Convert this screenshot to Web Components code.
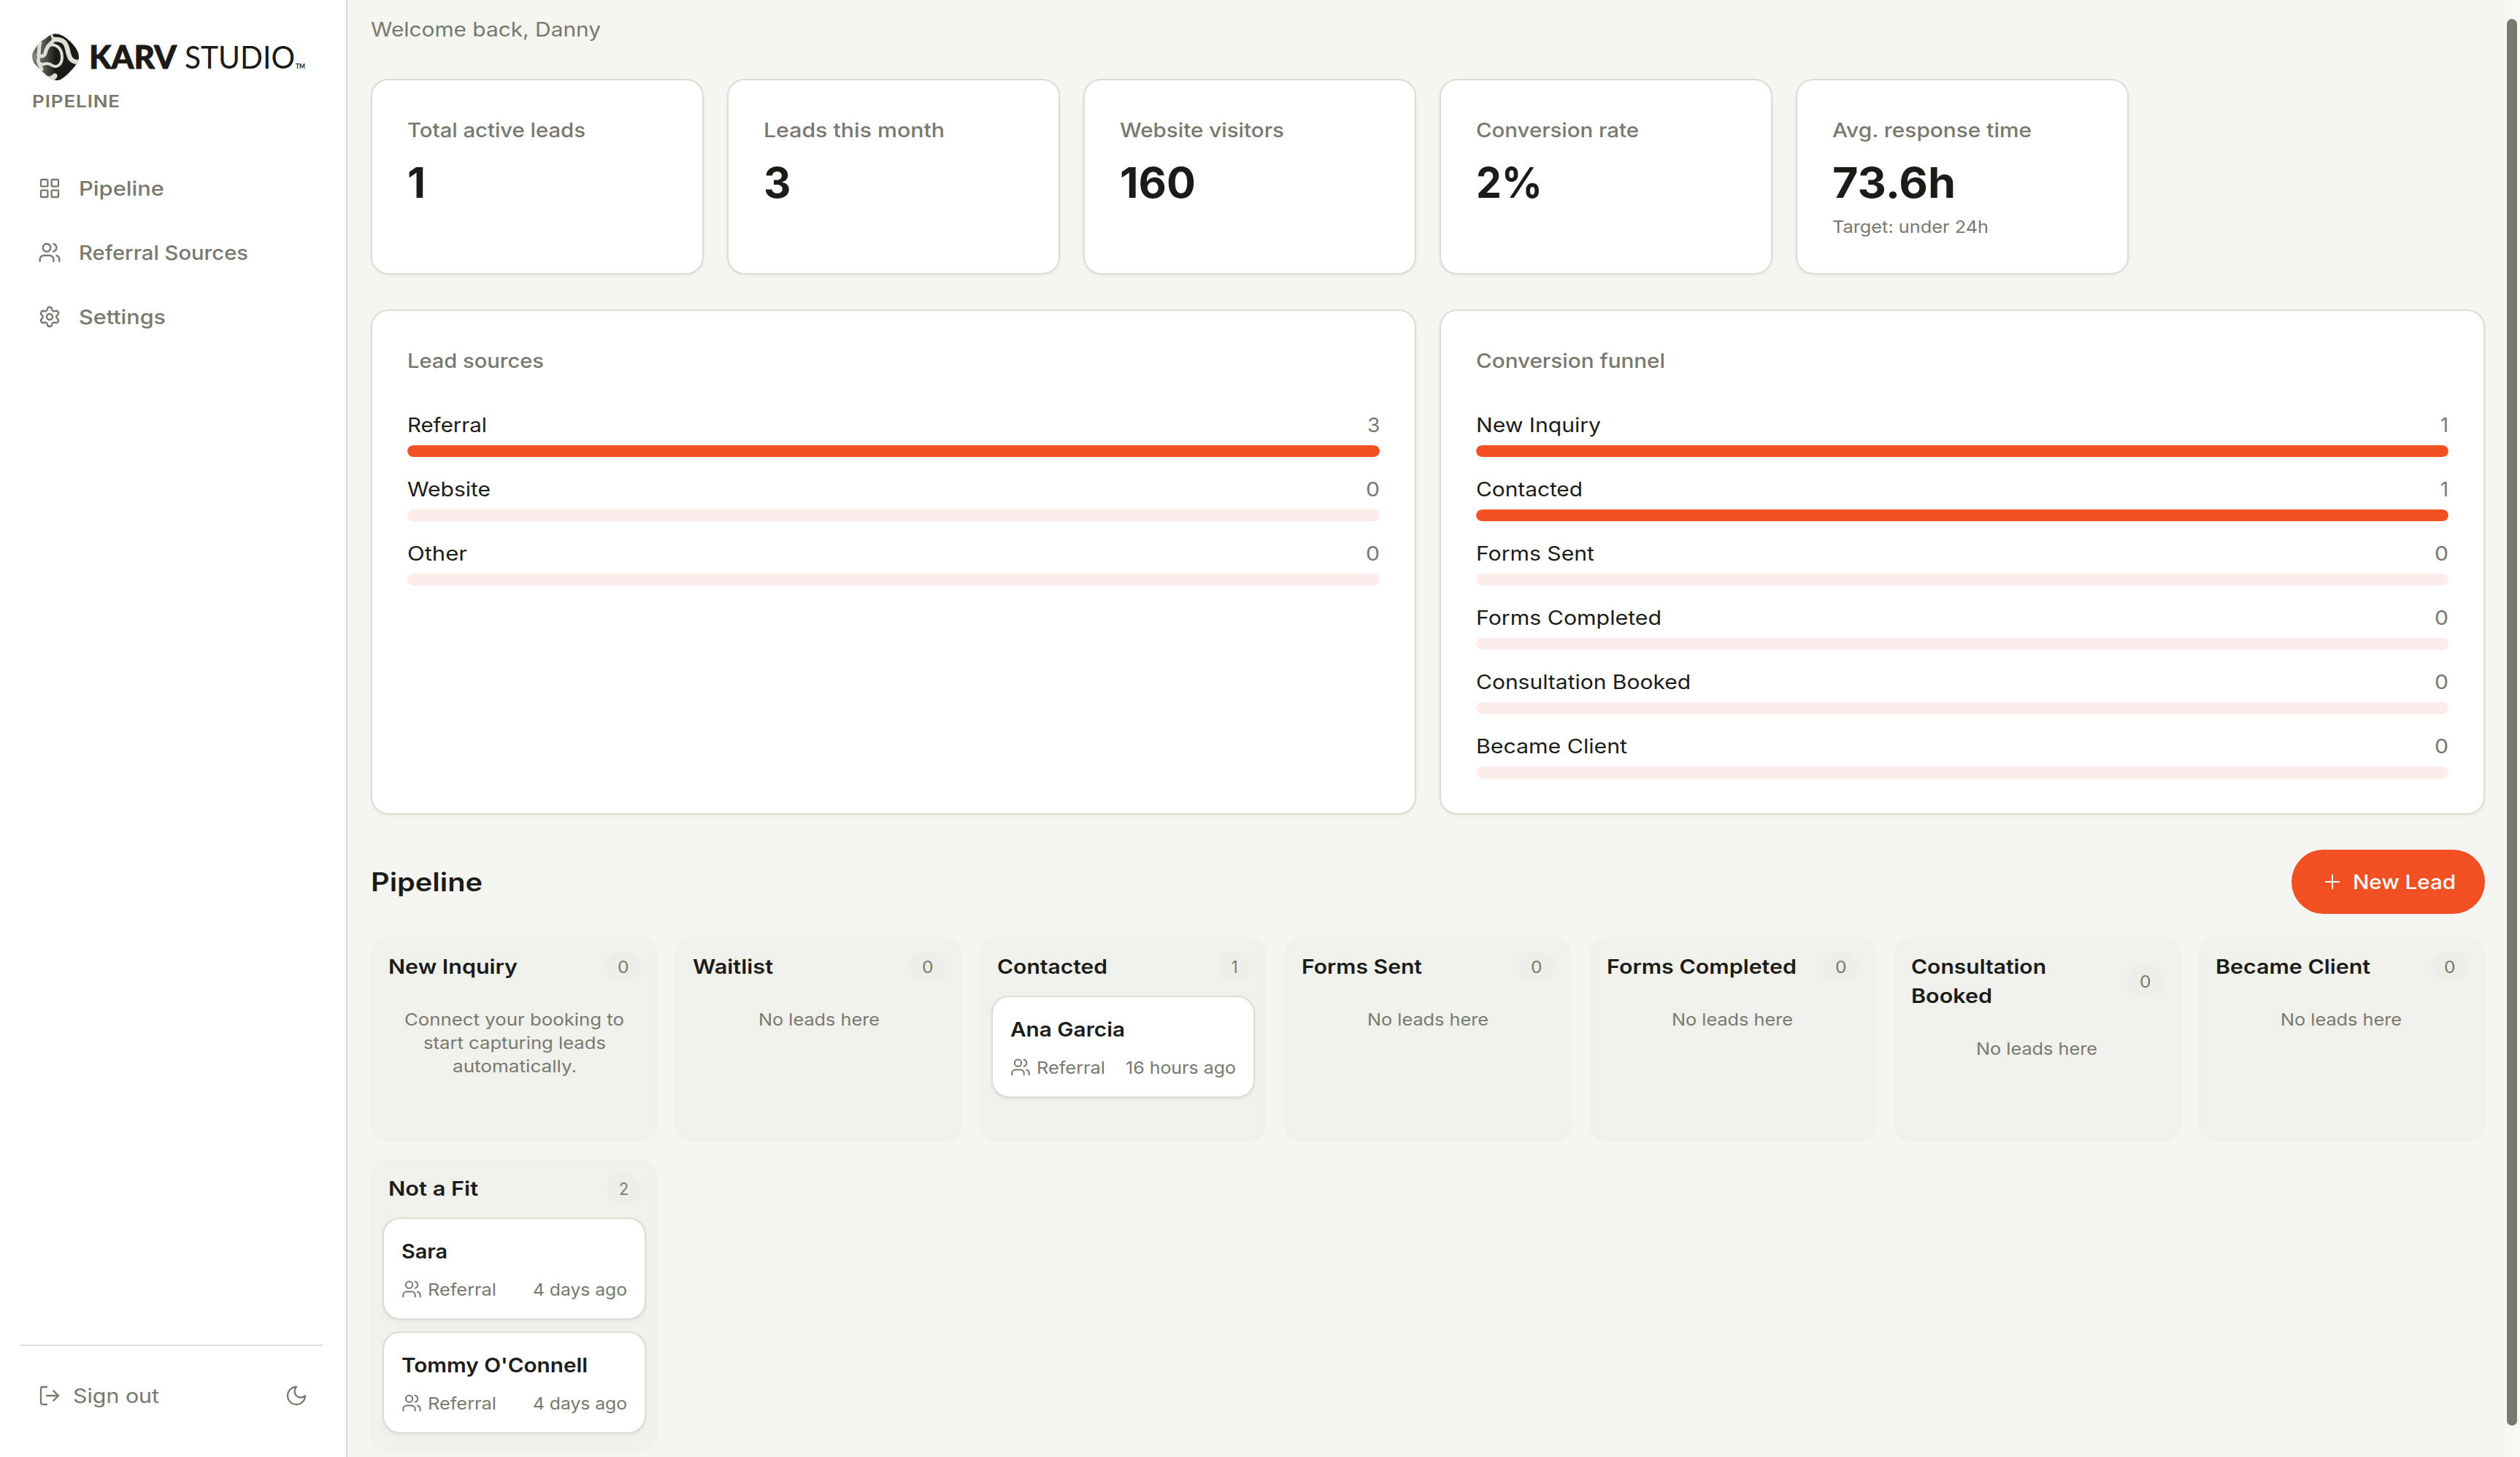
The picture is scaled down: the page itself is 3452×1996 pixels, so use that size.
<!DOCTYPE html>
<html lang="en">
<head>
<meta charset="utf-8">
<title>Karv Studio Pipeline</title>
<style>
html,body{margin:0;height:100%;overflow:hidden}
body{--ink:#1b1b18;--muted:#78786e;--line:#dcdcd4;--page:#f5f6f1;--col:#f0f1ec;--accent:#f25022;--tint:#fdebe9;
font-family:Inter,"Open Sans",sans-serif;font-size:27px;line-height:40px;color:var(--ink);background:var(--page)}
</style>
</head>
<body>
<karv-app></karv-app>
<script>
const ICONS={
grid:'<rect x="3" y="3" width="7" height="7" rx="1"/><rect x="14" y="3" width="7" height="7" rx="1"/><rect x="14" y="14" width="7" height="7" rx="1"/><rect x="3" y="14" width="7" height="7" rx="1"/>',
users:'<path d="M16 21v-2a4 4 0 0 0-4-4H6a4 4 0 0 0-4 4v2"/><path d="M16 3.128a4 4 0 0 1 0 7.744"/><path d="M22 21v-2a4 4 0 0 0-3-3.87"/><circle cx="9" cy="7" r="4"/>',
gear:'<path d="M9.671 4.136a2.34 2.34 0 0 1 4.659 0 2.34 2.34 0 0 0 3.319 1.915 2.34 2.34 0 0 1 2.33 4.033 2.34 2.34 0 0 0 0 3.831 2.34 2.34 0 0 1-2.33 4.033 2.34 2.34 0 0 0-3.319 1.915 2.34 2.34 0 0 1-4.659 0 2.34 2.34 0 0 0-3.32-1.915 2.34 2.34 0 0 1-2.33-4.033 2.34 2.34 0 0 0 0-3.831A2.34 2.34 0 0 1 6.35 6.051a2.34 2.34 0 0 0 3.319-1.915"/><circle cx="12" cy="12" r="3"/>',
logout:'<path d="m16 17 5-5-5-5"/><path d="M21 12H9"/><path d="M9 21H5a2 2 0 0 1-2-2V5a2 2 0 0 1 2-2h4"/>',
moon:'<path d="M12 3a6 6 0 0 0 9 9 9 9 0 1 1-9-9Z"/>',
plus:'<path d="M5 12h14"/><path d="M12 5v14"/>'
};
const define=(name,render,after)=>customElements.define(name,class extends HTMLElement{
  connectedCallback(){
    if(!this.shadowRoot){const r=this.attachShadow({mode:'open'});r.innerHTML=render(n=>this.getAttribute(n)||'');}
    if(after)after(this);
  }
});

/* Single-line text set wide to a given advance width. */
define('fit-text',()=>`<style>:host{display:block;white-space:nowrap;width:max-content}span{display:block;width:max-content;transform-origin:0 50%;transform:translateY(var(--dy,1px))}</style><span><slot></slot></span>`,
el=>{
  let w=+el.getAttribute('w');if(!w)return;
  const s=el.shadowRoot.querySelector('span'),n=s.offsetWidth;
  if(!n)return;
  el.style.width=w+'px';
  s.style.transform=`translateY(var(--dy,1px)) scaleX(${w/s.getBoundingClientRect().width})`;
});
define('k-icon',a=>`<style>:host{display:block;flex:none;width:${a('size')||32}px;height:${a('size')||32}px}svg{display:block;width:100%;height:100%}</style>
<svg viewBox="0 0 24 24" fill="none" stroke="currentColor" stroke-width="${a('sw')||1.75}" stroke-linecap="round" stroke-linejoin="round">${ICONS[a('name')]}</svg>`);

define('karv-logo',()=>`<style>:host{display:flex;align-items:center;height:64px;color:#1b1a17;--dy:0px}svg{display:block;width:64px;height:64px;margin-right:14px;flex:none}
.word{display:flex;align-items:baseline;font-family:Lato,sans-serif;font-size:43px;line-height:64px;margin-top:-1px}
.k{font-weight:900;-webkit-text-stroke:.8px currentColor}.s{margin-left:11px}.tm{font-size:9px;line-height:10px;font-weight:700;margin-left:1px}</style>
<svg viewBox="0 0 64 64">
<defs><clipPath id="d"><path d="M24 2.5Q32-2.5 43 3.5Q53 10 60 20Q64.5 27 64 34Q62 42 54 50Q45 60 38 63.5Q31 65.500 23 60Q12 51 3 41Q-1.500 34 1 26Q4 19 12 11Z"/></clipPath>
<linearGradient id="g"><stop offset="0" stop-color="#77776f"/><stop offset=".25" stop-color="#5a5a55"/><stop offset=".5" stop-color="#1b1a17"/></linearGradient></defs>
<g clip-path="url(#d)"><rect width="64" height="64" fill="url(#g)"/>
<g fill="none" stroke="#dedfd7" stroke-linecap="round" stroke-linejoin="round">
<path stroke-width="6.500" d="M30 8C44 7 47 14 49 24C51 34 54 40 66 39"/>
<path stroke-width="3" d="M26 0C28 4 27 7 30 9"/>
<path stroke-width="5" d="M30 9C24 14 19 20 18 27C17 31 12 32 8 30"/>
<path stroke-width="5" d="M11 13C9 17 10 23 9 29C6 38 11 43 13 49"/>
<path stroke-width="4" d="M21 17C32 12 41 20 41 32C41 42 35 47 28 44C23 40 20 41 15 42C11 43 9 40 8 37"/>
<path stroke-width="7" d="M22 62C27 62 31 59 31 58"/>
</g>
<ellipse cx="4" cy="32" rx="3" ry="5" fill="#85857d"/>
</g></svg>
<div class="word"><fit-text class="k" w="120">KARV</fit-text><fit-text class="s" w="151">STUDIO</fit-text><fit-text class="tm" w="13">TM</fit-text></div>`);

define('nav-item',a=>`<style>:host{display:flex;align-items:center;gap:24px;height:80px;padding:0 24px;color:var(--muted);font-weight:500}</style>
<k-icon name="${a('icon')}"></k-icon><fit-text w="${a('w')}">${a('label')}</fit-text>`);

define('side-bar',()=>`<style>:host{display:flex;flex-direction:column;box-sizing:border-box;width:476px;flex:none;height:100%;background:#fff;border-right:2px solid var(--line);padding:46px 32px 44px 28px}
.brand{padding-left:16px}.tag{font-size:23px;font-weight:600;line-height:32px;color:var(--muted);margin-top:13px;letter-spacing:.8px;--dy:0px}
nav{display:flex;flex-direction:column;gap:8px;margin-top:63px}
footer{margin-top:auto;border-top:2px solid var(--line);padding:28px 20px 0 24px;height:80px;display:flex;align-items:center;color:var(--muted)}
footer fit-text{margin-left:16px;margin-right:auto}</style>
<div class="brand"><karv-logo></karv-logo><fit-text class="tag" w="121">PIPELINE</fit-text></div>
<nav><nav-item icon="grid" w="117" label="Pipeline"></nav-item><nav-item icon="users" w="232" label="Referral Sources"></nav-item><nav-item icon="gear" w="119" label="Settings"></nav-item></nav>
<footer><k-icon name="logout"></k-icon><fit-text w="118">Sign out</fit-text><k-icon name="moon"></k-icon></footer>`);

define('stat-card',a=>`<style>:host{display:block;box-sizing:border-box;height:268px;background:#fff;border:2px solid var(--line);border-radius:24px;padding:48px;box-shadow:0 2px 4px rgba(0,0,0,.05)}
.l{font-weight:500;color:var(--muted)}.v{font-size:58px;line-height:72px;font-weight:700;margin-top:16px;--dy:0px}.n{font-size:23px;line-height:32px;color:var(--muted);margin-top:8px}</style>
<fit-text class="l" w="${a('lw')}">${a('label')}</fit-text><fit-text class="v" w="${a('vw')}">${a('value')}</fit-text>${a('note')?`<fit-text class="n" w="214">${a('note')}</fit-text>`:''}`);

define('bar-row',a=>`<style>:host{display:block}.t{display:flex;justify-content:space-between}.c{color:var(--muted)}.b{margin-top:8px;height:16px;border-radius:8px;background:var(--tint);overflow:hidden}.f{height:100%;border-radius:8px;background:var(--accent);width:${a('fill')||0}%}</style>
<div class="t"><fit-text w="${a('w')}">${a('label')}</fit-text><fit-text class="c" w="${{0:19,1:11,3:17.5}[a('count')]}">${a('count')}</fit-text></div><div class="b"><div class="f"></div></div>`);

define('chart-card',a=>`<style>:host{display:block;box-sizing:border-box;height:692px;background:#fff;border:2px solid var(--line);border-radius:24px;padding:48px;box-shadow:0 2px 4px rgba(0,0,0,.05)}
.h{font-weight:500;color:var(--muted);margin-bottom:48px}.r{display:flex;flex-direction:column;gap:24px}</style>
<fit-text class="h" w="${a('w')}">${a('heading')}</fit-text><div class="r"><slot></slot></div>`);

define('lead-card',a=>`<style>:host{display:block;box-sizing:border-box;height:140px;background:#fff;border:2px solid var(--line);border-radius:24px;padding:24px;box-shadow:0 2px 4px rgba(0,0,0,.06)}
.n{font-weight:600}.m{display:flex;align-items:center;margin-top:16px;font-size:23px;line-height:32px;color:var(--muted)}.m fit-text:nth-child(2){margin-left:8px;margin-right:auto}</style>
<fit-text class="n" w="${a('nw')}">${a('name')}</fit-text><div class="m"><k-icon name="users" size="28"></k-icon><fit-text w="94">Referral</fit-text><fit-text w="${a('tw')}">${a('time')}</fit-text></div>`);

define('pipe-column',a=>{
  const ws=a('w').split(',');
  return `<style>:host{display:block;box-sizing:border-box;min-height:280px;border-radius:24px;background:var(--col);padding:20px 16px 24px}
.h{display:flex;align-items:center;justify-content:space-between;padding:0 8px;font-weight:600;margin-bottom:20px}
.b{font-size:23px;line-height:32px;font-weight:400;color:var(--muted);background:#edeee8;border-radius:20px;padding:4px 16px}
.l{display:flex;flex-direction:column;gap:16px}::slotted(fit-text){font-size:23px;line-height:32px;color:var(--muted);margin:0 auto}
.l.e{gap:0;padding-top:16px}</style>
<div class="h"><div>${a('heading').split('|').map((t,i)=>`<fit-text w="${ws[i]}">${t}</fit-text>`).join('')}</div><div class="b"><fit-text w="${{0:15.5,1:8.5,2:13}[a('count')]}">${a('count')}</fit-text></div></div><div class="l ${a('empty')?'e':''}"><slot></slot></div>`});

define('new-button',()=>`<style>:host{display:flex;align-items:center;box-sizing:border-box;width:265px;height:88px;border-radius:44px;background:var(--accent);color:#fff;padding-left:40px;gap:12px;font-weight:500}</style>
<k-icon name="plus" sw="1.5"></k-icon><fit-text w="141">New Lead</fit-text>`);

define('scroll-bar',()=>`<style>:host{display:block;box-sizing:border-box;flex:none;width:20px;height:100%;background:#f8f9f5;padding:26px 4px 0 2px}div{height:1927px;border-radius:7px;background:var(--muted)}</style><div></div>`);

define('karv-app',()=>`<style>:host{display:flex;height:1996px;width:3452px}
main{flex:1;box-sizing:border-box;padding:20px 28px 0 32px;display:flex;flex-direction:column;min-width:0}
.w{color:var(--muted)}
.s{display:grid;grid-template-columns:repeat(6,1fr);gap:32px;margin-top:48px}
.c{display:grid;grid-template-columns:1fr 1fr;gap:32px;margin-top:48px}
.t{display:flex;justify-content:space-between;align-items:center;margin-top:48px}.t fit-text{font-size:35px;font-weight:600;--dy:0px}
.p{display:grid;grid-template-columns:repeat(7,1fr);gap:24px;margin-top:32px}</style>
<side-bar></side-bar>
<main>
<fit-text class="w" w="315">Welcome back, Danny</fit-text>
<div class="s">
<stat-card label="Total active leads" lw="244" value="1" vw=""></stat-card>
<stat-card label="Leads this month" lw="248" value="3" vw=""></stat-card>
<stat-card label="Website visitors" lw="225" value="160" vw="104"></stat-card>
<stat-card label="Conversion rate" lw="223" value="2%" vw="91"></stat-card>
<stat-card label="Avg. response time" lw="273" value="73.6h" vw="169" note="Target: under 24h"></stat-card>
</div>
<div class="c">
<chart-card heading="Lead sources" w="187">
<bar-row label="Referral" w="109" count="3" fill="100"></bar-row>
<bar-row label="Website" w="114" count="0"></bar-row>
<bar-row label="Other" w="82" count="0"></bar-row>
</chart-card>
<chart-card heading="Conversion funnel" w="259">
<bar-row label="New Inquiry" w="171" count="1" fill="100"></bar-row>
<bar-row label="Contacted" w="146" count="1" fill="100"></bar-row>
<bar-row label="Forms Sent" w="162" count="0"></bar-row>
<bar-row label="Forms Completed" w="254" count="0"></bar-row>
<bar-row label="Consultation Booked" w="294" count="0"></bar-row>
<bar-row label="Became Client" w="207" count="0"></bar-row>
</chart-card>
</div>
<div class="t"><fit-text w="153">Pipeline</fit-text><new-button></new-button></div>
<div class="p">
<pipe-column heading="New Inquiry" w="177" count="0" empty="1"><fit-text w="301">Connect your booking to</fit-text><fit-text w="250">start capturing leads</fit-text><fit-text w="170">automatically.</fit-text></pipe-column>
<pipe-column heading="Waitlist" w="110" count="0" empty="1"><fit-text w="166">No leads here</fit-text></pipe-column>
<pipe-column heading="Contacted" w="151" count="1"><lead-card name="Ana Garcia" nw="157" time="16 hours ago" tw="151"></lead-card></pipe-column>
<pipe-column heading="Forms Sent" w="165" count="0" empty="1"><fit-text w="166">No leads here</fit-text></pipe-column>
<pipe-column heading="Forms Completed" w="260" count="0" empty="1"><fit-text w="166">No leads here</fit-text></pipe-column>
<pipe-column heading="Consultation|Booked" w="185,111" count="0" empty="1"><fit-text w="166">No leads here</fit-text></pipe-column>
<pipe-column heading="Became Client" w="212" count="0" empty="1"><fit-text w="166">No leads here</fit-text></pipe-column>
<pipe-column heading="Not a Fit" w="123" count="2"><lead-card name="Sara" nw="63" time="4 days ago" tw="129"></lead-card><lead-card name="Tommy O'Connell" nw="255" time="4 days ago" tw="129"></lead-card></pipe-column>
</div>
</main>
<scroll-bar></scroll-bar>`);
</script>
</body>
</html>
